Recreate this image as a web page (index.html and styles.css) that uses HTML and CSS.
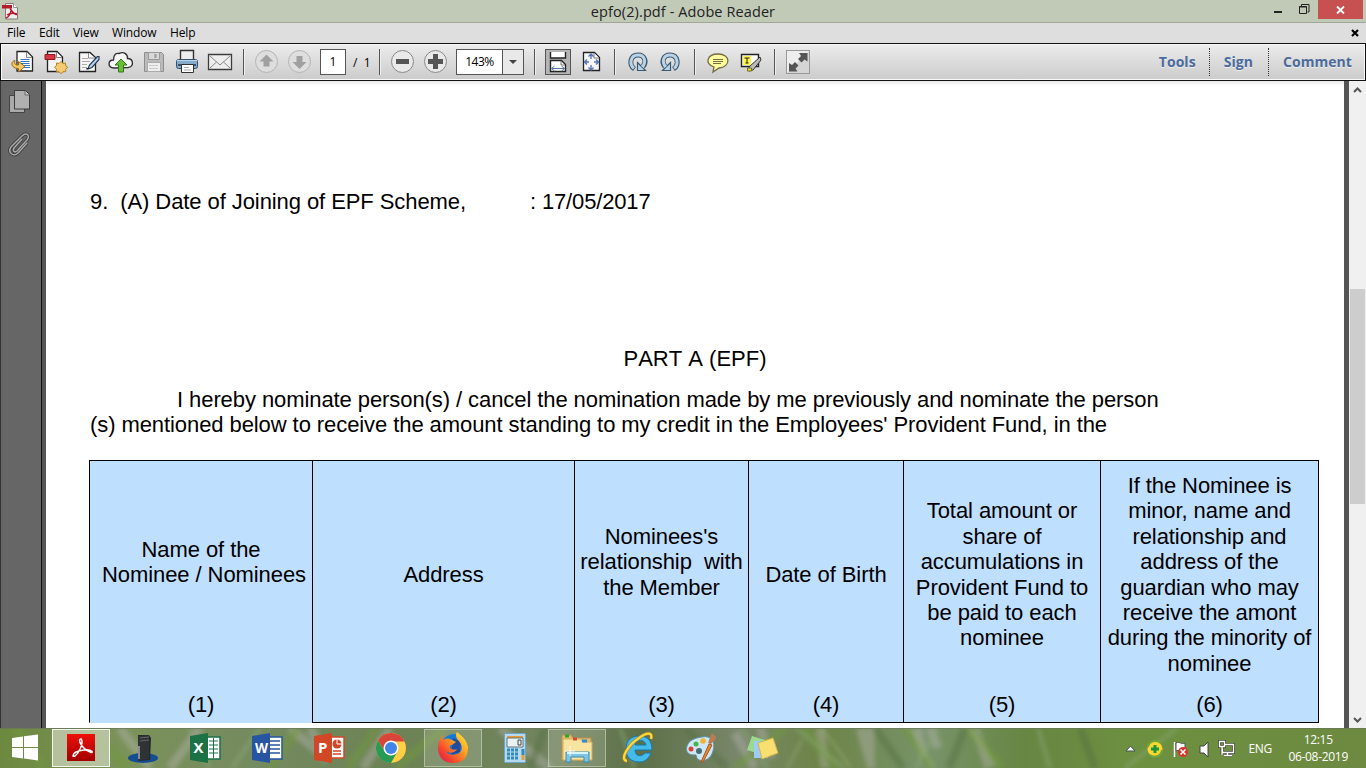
FILE: index.html
```html
<!DOCTYPE html>
<html lang="en">
<head>
<meta charset="utf-8">
<title>epfo(2).pdf - Adobe Reader</title>
<link rel="stylesheet" href="styles.css">
</head>
<body>
<div class="screen">
  <header class="titlebar">
    <svg class="app-icon" width="18" height="18" viewBox="0 0 18 18"><path d="M3.500 1.500h8l4 4v11.500h-12z" fill="#eee" stroke="#8d7777"/><path d="M11.500 1.500v4h4" fill="#fff" stroke="#999"/><path d="M0 3h10v3.500H0z" fill="#b21d2c"/><path d="M8 6.500c2.500 4 4 6 7 6M9 7c0 4-2 8-5 9M5 13c3-2 7-2 10-1" fill="none" stroke="#b6182a" stroke-width="1.500"/></svg>
    <h1 class="title">epfo(2).pdf - Adobe Reader</h1>
    <div class="window-buttons">
      <svg width="56" height="22" viewBox="0 0 56 22"><path d="M12 12h8" stroke="#222" stroke-width="2"/><path d="M39.500 6v-1.500h7.500v7.500h-1.500M37.500 6.500h7v7h-7zM37 7h8" fill="none" stroke="#222"/></svg>
      <span class="close"><svg width="9" height="8" viewBox="0 0 9 8"><path d="M1 .5l7 7M8 .5l-7 7" stroke="#fff" stroke-width="1.800"/></svg></span>
    </div>
  </header>
  <nav class="menubar">
    <span class="m-file">File</span><span class="m-edit">Edit</span><span class="m-view">View</span><span class="m-window">Window</span><span class="m-help">Help</span>
    <svg class="doc-close" width="8" height="8" viewBox="0 0 8 8"><path d="M1 1l6 6M7 1l-6 6" stroke="#000" stroke-width="2.200"/></svg>
  </nav>
  <div class="toolbar">
    <span class="tool"><svg width="28" height="28" viewBox="0 0 28 28"><path d="M9 3.500h10l5.500 5.500v14H9z" fill="#fff" stroke="#222" stroke-width="1.300"/><path d="M18.500 4v5.500h5.500" fill="#eee" stroke="#888"/><path d="M12.500 11.500h9M12.500 13.500h9M12.500 15.500h9M15 17.500h7M15 19.500h7" stroke="#3a75c4"/><path d="M7 12.500c-5 1-4 8 3.500 8v3.500l6.500-5.500-6.500-5v3.500c-3 .3-4.500-1-3.500-4.500z" fill="#f4c864" stroke="#9b6717"/></svg></span>
    <span class="tool"><svg width="28" height="28" viewBox="0 0 28 28"><path d="M6.500 3.500h9.500l5.500 5.500v14.500h-15z" fill="#f4f4f4" stroke="#222" stroke-width="1.300"/><path d="M15.500 4v5.500h5.500" fill="#fff" stroke="#888"/><path d="M4 6.500h10v5H4z" fill="#d93643" stroke="#8f1723"/><path d="M15.500 15l2.500.5 2-2 2 2 2.500-.5.2 2.700 2 1.500-2 2v2.500l-2.700 0-2 2-2-2h-2.500v-2.500l-2-2 2-1.700z" fill="#f2cb73" stroke="#b88421"/></svg></span>
    <span class="tool"><svg width="28" height="28" viewBox="0 0 28 28"><path d="M5.500 4.500h10.500l5.500 5v14h-16z" fill="#f6f6f6" stroke="#222" stroke-width="1.300"/><path d="M14.500 5v5h6.500" fill="#fff" stroke="#888"/><path d="M8 10.500h6M8 13.500h8M8 16.500h5M8 19.500h5" stroke="#aaa"/><path d="M23.500 8.500l-8 8.500-1.500 4 4-1.500 7-8v-3z" fill="#bbd4eb" stroke="#263b55" stroke-width="1.200"/><path d="M12 21l3-1" stroke="#222"/></svg></span>
    <span class="tool"><svg width="28" height="28" viewBox="0 0 28 28"><path d="M7 20c-7-.5-6-8-.5-8 0-6 3-7 5.500-6.500 5-2.500 9 1 8.500 5 6 0 7 8.500.5 9z" fill="#f7f7f7" stroke="#333" stroke-width="1.400"/><path d="M14 11l6 6h-3.500v7h-5v-7H8z" fill="#69bd39" stroke="#34791b"/></svg></span>
    <span class="tool"><svg width="28" height="28" viewBox="0 0 28 28"><path d="M4.500 4.500h17l2 2v17h-19z" fill="#bbb" stroke="#8d8d8d"/><path d="M8.500 4.500h11v7h-11z" fill="#d8d8d8" stroke="#999"/><path d="M15.500 6v4" stroke="#999" stroke-width="2"/><path d="M7.500 14.500h13v9h-13z" fill="#eee" stroke="#aaa"/><path d="M9.500 17.500h9M9.500 20.500h9" stroke="#bbb" stroke-dasharray="2 1"/></svg></span>
    <span class="tool"><svg width="28" height="28" viewBox="0 0 28 28"><path d="M7.500 2.500h13v10h-13z" fill="#eee" stroke="#333" stroke-width="1.400"/><rect x="3.500" y="11.500" width="21" height="9" rx="2" fill="#86aaca" stroke="#344d68"/><path d="M5 16h18v2H5z" fill="#365575"/><path d="M4 12.500h20" stroke="#b9d7ed"/><path d="M8.500 16.500h12v8h-12z" fill="#fff" stroke="#333"/><path d="M11 19.500h5M11 22h7" stroke="#aaa"/></svg></span>
    <span class="tool"><svg width="28" height="28" viewBox="0 0 28 28"><path d="M2.500 6.500h23v15h-23z" fill="#eee" stroke="#3c3c3c" stroke-width="1.300"/><path d="M4 8l10 9 10-9M4 20l6.500-6M24 20l-6.500-6" fill="none" stroke="#888"/></svg></span>
    <i class="separator"></i>
    <span class="tool"><svg width="28" height="28" viewBox="0 0 28 28"><circle cx="13.500" cy="13.500" r="11" fill="#dedede" stroke="#b4b4b4"/><path d="M13.500 6.500l7 7h-4v5h-6v-5h-4z" fill="#a0a0a0"/></svg></span>
    <span class="tool"><svg width="28" height="28" viewBox="0 0 28 28"><circle cx="13.500" cy="13.500" r="11" fill="#dedede" stroke="#b4b4b4"/><path d="M13.500 21l7-7h-4V8h-6v6h-4z" fill="#a0a0a0"/></svg></span>
    <span class="page-number">1</span><span class="page-total">/&nbsp; 1</span>
    <i class="separator"></i>
    <span class="tool"><svg width="28" height="28" viewBox="0 0 28 28"><circle cx="13.500" cy="13.500" r="11" fill="#e9e9e9" stroke="#888"/><path d="M7 11h13v5H7z" fill="#555"/></svg></span>
    <span class="tool"><svg width="28" height="28" viewBox="0 0 28 28"><circle cx="13.500" cy="13.500" r="11" fill="#e9e9e9" stroke="#888"/><path d="M11 6h5v5h5v5h-5v5h-5v-5H6v-5h5z" fill="#555"/></svg></span>
    <span class="zoom-box"><span class="zoom-value">143%</span><span class="zoom-arrow"></span></span>
    <i class="separator after-zoom"></i>
    <span class="tool selected"><svg width="28" height="28" viewBox="0 0 28 28"><rect x="1.500" y="1.500" width="25" height="25" fill="#b4b4b4" stroke="#555"/><path d="M6.500 4v6h15V4" fill="#fff" stroke="#222" stroke-width="1.400"/><path d="M6.500 23.500v-11h11l4 4v7z" fill="#fff" stroke="#222" stroke-width="1.400"/><path d="M17 13v4h4" fill="none" stroke="#777"/><path d="M8 20.500h12M10.500 18l-3 2.500 3 2.500M17.500 18l3 2.500-3 2.500" fill="none" stroke="#5371b0"/></svg></span>
    <span class="tool"><svg width="28" height="28" viewBox="0 0 28 28"><path d="M6.500 4.500h11l5 5v13h-16z" fill="#f7f7f7" stroke="#222" stroke-width="1.300"/><path d="M17 5v5h5" fill="#fff" stroke="#777"/><path d="M14 6v5M14 17v5M8 14h4M17 14h5M11.500 8.500L14 6l2.500 2.500M11.500 19.500L14 22l2.500-2.500M10 11.500L7.500 14l2.500 2.500M19 11.500l2.500 2.500-2.500 2.500" fill="none" stroke="#5774b4" stroke-width="1.400"/></svg></span>
    <i class="separator"></i>
    <span class="tool"><svg width="28" height="28" viewBox="0 0 28 28"><g id="rotate"><path d="M10.500 21c-6-4-4.500-14 3.500-14 7 0 9 7 5 11.500" fill="none" stroke="#3d5970" stroke-width="5"/><path d="M13.500 14.500v8h8z" fill="#b8d2e6" stroke="#3d5970" stroke-width="1.200"/><path d="M10 20.300c-5-3.700-3.800-13.300 4-13.300 7 0 8.500 7 4.300 12" fill="none" stroke="#b8d2e6" stroke-width="3"/></g></svg></span>
    <span class="tool"><svg width="28" height="28" viewBox="0 0 28 28"><use href="#rotate" transform="translate(27 0) scale(-1 1)"/></svg></span>
    <i class="separator"></i>
    <span class="tool"><svg width="28" height="28" viewBox="0 0 28 28"><path d="M14 6c13 0 13 13 1 14l-6 4 1-5C0 16 3 6 14 6z" fill="#ffff9f" stroke="#746a43" stroke-width="1.300"/><path d="M9 11.500h10M9 13.500h10M9 15.500h8" stroke="#74703f"/></svg></span>
    <span class="tool"><svg width="28" height="28" viewBox="0 0 28 28"><path d="M4.500 6.500h17v12h-17z" fill="#fff" stroke="#222" stroke-width="1.400"/><path d="M6 8h8v9H6z" fill="#fff54b"/><path d="M7.500 10h5M10 10v5M8.500 15h3" stroke="#222"/><path d="M23 9L12 19v4l4-1L24 12z" fill="#bbb" stroke="#333"/><path d="M10.500 20h4v3h-4z" fill="#eee338" stroke="#756b21"/></svg></span>
    <i class="separator"></i>
    <span class="tool"><svg width="28" height="28" viewBox="0 0 28 28"><rect x="2.500" y="2.500" width="23" height="23" fill="#d5d5d5" stroke="#999"/><path d="M3 3h22L3 25z" fill="#eee"/><path d="M15 5h8.500v8.500l-3-2-3 3-3.500-3.500 3-3zM5 15l3 2 3-3 3.500 3.500-3 3 2 3H5z" fill="#555"/></svg></span>
    <div class="panes"><b>Tools</b><b>Sign</b><b>Comment</b></div>
  </div>
  <main class="viewer">
    <aside class="rail">
      <svg width="24" height="26" viewBox="0 0 24 26"><path d="M2.500 7.500h15v17h-15z" fill="#aaa" stroke="#444"/><path d="M7.500 2.500h11l4 4v14.500h-15z" fill="#b0b0b0" stroke="#3c3c3c"/><path d="M18 3v4h4" fill="#ccc" stroke="#666"/></svg>
      <svg width="24" height="26" viewBox="0 0 24 26"><path d="M15 8L7 17c-2 3 1 5 3 3l10-11c4-5-1-8-5-4L4 16c-4 6 3 10 7 6l9-10" fill="none" stroke="#3c3c3c" stroke-width="3.200"/><path d="M15 8L7 17c-2 3 1 5 3 3l10-11c4-5-1-8-5-4L4 16c-4 6 3 10 7 6l9-10" fill="none" stroke="#aaa" stroke-width="1.500"/></svg>
    </aside>
    <article class="page">
      <p class="joining"><span class="joining-label">9.&nbsp; (A) Date of Joining of EPF Scheme,</span><span class="joining-date">: 17/05/2017</span></p>
      <h2 class="part">PART A (EPF)</h2>
      <p class="declaration"><span class="line-one">I hereby nominate person(s) / cancel the nomination made by me previously and nominate the person</span><span class="line-two">(s) mentioned below to receive the amount standing to my credit in the Employees' Provident Fund, in the</span></p>
      <div class="nominees">
        <section class="raised name"><p><span class="first-line">Name of the</span><br>Nominee / Nominees</p><span>(1)</span></section>
        <section><p>Address</p><span>(2)</span></section>
        <section class="raised"><p>Nominees's<br>relationship&nbsp; with<br>the Member</p><span>(3)</span></section>
        <section><p>Date of Birth</p><span>(4)</span></section>
        <section><p>Total amount or<br>share of<br>accumulations in<br>Provident Fund to<br>be paid to each<br>nominee</p><span>(5)</span></section>
        <section><p>If the Nominee is<br>minor, name and<br>relationship and<br>address of the<br>guardian who may<br>receive the amont<br>during the minority of<br>nominee</p><span>(6)</span></section>
      </div>
    </article>
    <div class="scrollbar">
      <svg width="9" height="6" viewBox="0 0 9 6"><path d="M1 5l3.500-3.500L8 5" fill="none" stroke="#555" stroke-width="2"/></svg>
      <div class="thumb"></div>
      <svg width="9" height="6" viewBox="0 0 9 6"><path d="M1 1l3.500 3.500L8 1" fill="none" stroke="#555" stroke-width="2"/></svg>
    </div>
  </main>
  <footer class="taskbar">
    <svg class="grass" viewBox="0 0 1366 40" preserveAspectRatio="none">
      <defs><filter id="soft" x="-5%" y="-30%" width="110%" height="160%"><feGaussianBlur stdDeviation="2"/></filter></defs>
      <g filter="url(#soft)" fill="none">
        <path d="M120 0l30 40M170 40L200 0M290 0l38 32M310 0l15 25M363 40L390 0M500 0l50 40M820 0l5 40M860 0l12 40M870 0v30M918 0l5 28M930 0l8 20M975 0l14 40M735 5l20 35M760 0l12 30" stroke="#b8b4b4" stroke-width="9" opacity=".4"/>
        <path d="M15 0l30 40M88 0l40 40M270 40L298 0M348 40L377 0M396 40L445 0M735 40L785 0M804 0l32 40M905 0l27 40M969 0l33 40" stroke="#6f983c" stroke-width="9" opacity=".5"/>
        <path d="M188 0l22 40M232 40L260 0M620 0l15 40M742 0l25 40M796 0l48 40M938 0l-22 40M1038 0l12 40M1177 0l-52 40" stroke="#8aa878" stroke-width="4" opacity=".5"/>
        <path d="M545 0l-15 40M685 0l42 40M875 0l28 40M949 40L965 0M1080 0l15 40" stroke="#526f40" stroke-width="8" opacity=".45"/>
        <path d="M822 0l29 40M910 0l24 40M969 0l27 38M787 40l15-28" stroke="#a4b57f" stroke-width="1.500" opacity=".7"/>
      </g>
      <path d="M0 .5h1366" stroke="#69755b" opacity=".7"/>
    </svg>
    <div class="apps">
      <span class="start"><svg width="28" height="28" viewBox="0 0 28 28"><path d="M1 4l11-1.500V13H1zM13 2.300L27 .5V13H13zM1 14h11v10.500L1 23zM13 14h14v12.500l-14-2z" fill="#fff"/></svg></span>
      <span class="app current"><svg width="30" height="30" viewBox="0 0 30 30"><defs><linearGradient id="red" x2="0" y2="1"><stop stop-color="#ed1109"/><stop offset="1" stop-color="#a30000"/></linearGradient></defs><path d="M1 1h28v27H1z" fill="url(#red)"/><path d="M15 6c-4 0 1 10 9 13 4 2 3-3-6-2S7 20 7 23c2 2 8-6 9-13 0-3 0-4-1-4z" fill="none" stroke="#fff" stroke-width="1.500"/></svg></span>
      <span class="app"><svg width="32" height="32" viewBox="0 0 32 32"><ellipse cx="16" cy="26" rx="15" ry="5" fill="#144d91"/><path d="M11 3l11 0 2 3-1 22-12 1z" fill="#25282b"/><path d="M11 4l11-1v24l-11 2z" fill="#303336"/><path d="M13 6l9-1M13 9l9-1" stroke="#666"/><path d="M12 14v13" stroke="#aaa" stroke-width="1.500"/></svg></span>
      <span class="app"><svg width="32" height="32" viewBox="0 0 32 32"><path d="M16 5h15v22H16z" fill="#fff" stroke="#1c7245" stroke-width="1.500"/><path d="M20 9h9M20 13h9M20 17h9M20 21h9M24.500 6v20" stroke="#1c7245"/><path d="M1 4l18-3v30L1 28z" fill="#1c7245"/><text x="4.500" y="21" class="letter">X</text></svg></span>
      <span class="app"><svg width="32" height="32" viewBox="0 0 32 32"><path d="M16 5h15v22H16z" fill="#fff" stroke="#2855a1" stroke-width="1.500"/><path d="M19 9h10M19 13h10M19 17h10M19 21h10" stroke="#2855a1" stroke-width="1.500"/><path d="M1 4l18-3v30L1 28z" fill="#2855a1"/><text x="4" y="21" class="letter" textLength="13" lengthAdjust="spacingAndGlyphs">W</text></svg></span>
      <span class="app"><svg width="32" height="32" viewBox="0 0 32 32"><path d="M16 5h15v21H16z" fill="#fff" stroke="#d24726" stroke-width="1.500"/><path d="M20 19h8M20 22h8" stroke="#d24726" stroke-width="1.500"/><circle cx="24" cy="12" r="4.500" fill="#d24726"/><path d="M24 7v5h5" stroke="#fff" fill="none"/><path d="M1 4l18-3v30L1 28z" fill="#d24726"/><text x="5" y="21" class="letter">P</text></svg></span>
      <span class="app"><svg width="32" height="32" viewBox="0 0 32 32"><circle cx="16" cy="16" r="15" fill="#ffce44"/><path d="M3 8.500A15 15 0 0 1 29.500 9.500H16L10 20z" fill="#d94538"/><path d="M3 8.500A15 15 0 0 0 16 31l6.500-11.500L10 20z" fill="#279b54"/><circle cx="16" cy="16" r="7.500" fill="#fff"/><circle cx="16" cy="16" r="6" fill="#4285e8"/></svg></span>
      <span class="app running"><svg width="32" height="32" viewBox="0 0 32 32"><defs><linearGradient id="fox" x1="1" x2="0" y2="1"><stop stop-color="#fff33d"/><stop offset=".4" stop-color="#ff9c20"/><stop offset=".75" stop-color="#f33c33"/><stop offset="1" stop-color="#cc195d"/></linearGradient></defs><circle cx="17" cy="14" r="12" fill="#1679d6"/><path d="M16 6l8 4-1 10-9 3z" fill="#234b9b"/><path d="M6 2C5 5 5 7 6 8c3-2 6-2 9 0l4 2-4 3c-2 0-3 2-1 4 2 1 4 1 6 0-2 4-7 5-11 2 2 5 12 5 15 0 2-4 0-7-2-10-3-3-4-6-2-9 5 4 9 7 11 15 0 12-6 16-15 16S1 25 1 16c0-6 2-10 5-14z" fill="url(#fox)"/></svg></span>
      <span class="app"><svg width="32" height="32" viewBox="0 0 32 32"><rect x="5.500" y="1.500" width="21" height="29" rx="1" fill="#b6d9ed" stroke="#69a6c8"/><path d="M8 4h16v2H8z" fill="#e69b37"/><path d="M8 6h16v9H8z" fill="#e9f1f1" stroke="#5f7780"/><path d="M19 8h3v5h-3z" fill="none" stroke="#444"/><path d="M8 18h12M8 22h12M8 26h12" stroke="#348ab7" stroke-width="3" stroke-dasharray="3 1"/><path d="M24 17v6" stroke="#348ab7" stroke-width="3"/><path d="M24 23v5" stroke="#ec9f29" stroke-width="3"/></svg></span>
      <span class="app running"><svg width="34" height="32" viewBox="0 0 34 32"><path d="M2 3h9l2 3h18v22H2z" fill="#e3bd68" stroke="#bc914c"/><path d="M3 7h18l2 3h9v18H3z" fill="#f9e3a1" stroke="#d3ac5c"/><path d="M5 4h4" stroke="#27a53d" stroke-width="3"/><path d="M13 7h4" stroke="#d64835" stroke-width="3"/><path d="M22 9h5" stroke="#328ad7" stroke-width="3"/><path d="M6 30V20h23v10h-5v-5H11v5z" fill="#7ec5e4" stroke="#398cb0"/><path d="M7 21h21" stroke="#d7f3fb" stroke-width="2"/><path d="M10 14v10M5 19h10" stroke="#fff" opacity=".8"/></svg></span>
      <span class="app"><svg width="34" height="34" viewBox="0 0 34 34"><path d="M17 5c9 0 13 5 13 14H13c0 7 7 7 10 3h6c-3 7-7 9-12 9-8 0-13-5-13-13S9 5 17 5zm-4 9h11c-1-6-10-6-11 0z" fill="#43bce9" stroke="#1977b4"/><path d="M5 30c-8-1 1-16 12-23C25 1 31 1 29 8" fill="none" stroke="#a88222" stroke-width="3.500"/><path d="M5 30c-8-1 1-16 12-23C25 1 31 1 29 8" fill="none" stroke="#fed83e" stroke-width="2.300"/></svg></span>
      <span class="app"><svg width="34" height="34" viewBox="0 0 34 34"><path d="M18 6c9-2 14 5 11 14-2 8-9 11-14 9-4-2-1-6-5-5-5 0-9-3-7-9C5 9 11 7 18 6z" fill="#cde8f4" stroke="#5d91b0"/><circle cx="7" cy="18" r="2.500" fill="#df3f3b"/><circle cx="12" cy="13" r="2.500" fill="#44b450"/><circle cx="19" cy="10" r="2.800" fill="#f1b334"/><circle cx="15" cy="20" r="3" fill="#456e72"/><path d="M17 31l8-18 3 1-9 17z" fill="#ed8a2f" stroke="#a65522"/><path d="M24 12c2-5 3-9 4-10 3 3 5 3 4 6-1 2-4 3-5 5z" fill="#b87b52"/></svg></span>
      <span class="app"><svg width="34" height="32" viewBox="0 0 34 32"><path d="M6 4l13 4-5 14-13-4z" fill="#9bd98f"/><path d="M8 9h14v17H8z" fill="#9dcdf6"/><path d="M12 11l15-5 5 15-16 6z" fill="#f7df70" stroke="#d1b64d"/></svg></span>
    </div>
    <div class="tray">
      <svg width="112" height="22" viewBox="0 0 112 22"><path d="M3 14l4.500-5 4.500 5z" fill="#fff" stroke="#455"/><circle cx="32" cy="12" r="7.500" fill="#ffd62b"/><path d="M25 10c1-6 8-8 13-4M39 13c-1 7-8 8-12 5" fill="none" stroke="#6fa63a" stroke-width="2"/><path d="M32 8v8M28 12h8" stroke="#169642" stroke-width="3"/><path d="M51.500 5v15" stroke="#fff" stroke-width="1.500"/><path d="M53 6c4-2 5 2 9 0v8c-4 2-6-2-9 0z" fill="#fff" stroke="#555"/><circle cx="60" cy="15" r="5" fill="#d7352c"/><path d="M57.500 12.500l5 5M62.500 12.500l-5 5" stroke="#fff" stroke-width="1.500"/><path d="M77 9h4l4-4v15l-4-4h-4z" fill="#fff" stroke="#444"/><path d="M101.500 7.500h9v8h-11v-4M104.500 16v3M101 18.500h8M96.500 4.500h5v5h-5zM99 10v8" fill="none" stroke="#454a3c" stroke-width="3"/><path d="M101.500 7.500h9v8h-11v-4M104.500 16v3M101 18.500h8M96.500 4.500h5v5h-5zM99 10v8" fill="none" stroke="#fff" stroke-width="1.300"/></svg>
      <span class="language">ENG</span>
      <span class="clock"><span>12:15</span><span>06-08-2019</span></span>
    </div>
  </footer>
</div>
</body>
</html>
```
FILE: styles.css
```css
* { box-sizing: border-box; }
body { margin: 0; font-family: "Open Sans", "Noto Sans", sans-serif; color: #000; }
svg { display: block; overflow: visible; }
.screen { width: 1366px; height: 768px; display: grid; grid-template-rows: 23px 20px 38px 647px 40px; overflow: hidden; }

.titlebar { background: #c1cab7; border-bottom: 1px solid #a0a895; display: grid; grid-template-columns: 230px 1fr 230px; }
.app-icon { margin: 2px 0 0 2px; }
.title { margin: 0; font-size: 14.500px; font-weight: 400; line-height: 23px; text-align: center; color: #222; letter-spacing: .1px; }
.window-buttons { display: flex; justify-content: flex-end; padding-right: 3px; }
.close { width: 45px; height: 19px; background: #c75050; display: grid; place-items: center; }
.menubar { background: #dedede; display: flex; font-size: 12px; line-height: 20px; padding-left: 7px; letter-spacing: -.15px; }
.m-file { width: 32px; } .m-edit { width: 34px; } .m-view { width: 39px; } .m-window { width: 58px; }
.doc-close { margin: 6px 7px 0 auto; }

.toolbar { border: 1px solid #111; box-shadow: inset 0 0 0 1px #f8f8f8; background: linear-gradient(#ececec, #cbcbcb); display: flex; align-items: center; padding-left: 4px; font-size: 12px; }
.tool { width: 33px; flex: none; display: flex; justify-content: center; }
.separator { width: 2px; height: 26px; flex: none; margin: 0 5px 0 7px; background: linear-gradient(90deg, #555 50%, #eee 50%); }
.page-number { width: 26px; height: 26px; flex: none; margin-left: 4px; border: 1px solid #555; background: #fff; text-align: center; line-height: 24px; }
.page-total { width: 26px; flex: none; padding-left: 7px; white-space: nowrap; }
.zoom-box { width: 68px; height: 26px; flex: none; display: flex; margin-left: 4px; border: 1px solid #555; background: #fff; }
.zoom-value { width: 45px; text-align: center; line-height: 24px; letter-spacing: -.5px; }
.zoom-arrow { flex: 1; border-left: 1px solid #555; background: #e9e9e9; display: grid; place-items: center; }
.zoom-arrow::after { content: ""; border: 4px solid transparent; border-top-color: #444; border-bottom: 0; }
.after-zoom { margin-left: 10px; }
.panes { margin-left: auto; height: 28px; display: flex; font-size: 14px; line-height: 27px; color: #4b6b9c; text-shadow: 0 1px #eee; letter-spacing: .05px; }
.panes b { padding: 0 13px 0 14px; }
.panes b:nth-child(2) { padding-right: 15px; }
.panes b + b { border-left: 1px dotted #333; }

.viewer { display: grid; grid-template-columns: 41px 1308px 17px; }
.rail { background: #666; border-left: 1px solid #333; padding: 7px 0 0 6px; display: flex; flex-direction: column; gap: 17px; }
.page { border-left: 1px solid #111; box-shadow: inset 4px 0 #555, inset -5px 0 #555; padding: 0 0 0 48px; font-family: "Liberation Sans", Arial, sans-serif; font-size: 22px; line-height: 25.400px; letter-spacing: -.08px; background: linear-gradient(#e8e8e8, #fff 5px); overflow: hidden; white-space: nowrap; }
.joining { margin: 108px 0 0; display: flex; height: 26px; }
.joining-label { width: 440px; }
.joining-date { letter-spacing: -.15px; }
.part { font-size: 22px; font-weight: 400; margin: 131px 0 0; width: 1210px; text-align: center; height: 26px; font-kerning: none; letter-spacing: 0; }
.declaration { margin: 15px 0 0; height: 51px; }
.declaration span { display: block; width: max-content; }
.line-one { margin-left: 87px; }
.nominees { margin: 22px 0 0 -1px; width: 1230px; height: 263px; display: grid; grid-template-columns: 223px 262px 174px 155px 197px 219px; border-top: 1px solid #000; }
.nominees section { background: #bfdfff; border-left: 1px solid #000; border-bottom: 1px solid #000; display: grid; grid-template-rows: 226px 1fr; text-align: center; }
.nominees section:first-child { border-bottom-color: #bfdfff; }
.nominees section:last-child { border-right: 1px solid #000; }
.nominees p { margin: auto 0; padding-top: 1px; }
.nominees .raised p { padding: 0 0 24px; }
.nominees .name p { padding-left: 6px; }
.first-line { padding-right: 6px; }
.nominees section > span { padding-top: 5px; }
.scrollbar { background: #f0f0f0; display: grid; grid-template-rows: 208px 215px 1fr; justify-items: center; }
.scrollbar > svg:first-child { margin-top: 6px; }
.scrollbar > svg:last-child { align-self: end; margin-bottom: 5px; }
.thumb { width: 15px; background: #cdcdcd; }

.taskbar { display: grid; background: linear-gradient(90deg, #6d893f 0, #7b9259 9%, #748a60 19%, #6d8254 29%, #71845f 41%, #5d7048 47%, #78876a 54%, #6d8447 60%, #78936a 68%, #678643 75%, #6d9040 83%, #6d8a40 100%); overflow: hidden; }
.taskbar > * { grid-area: 1 / 1; }
.grass { width: 1366px; height: 40px; }
.apps { display: flex; height: 40px; z-index: 1; }
.start { width: 50px; padding: 6px 0 0 11px; }
.app { width: 58px; height: 38px; margin: 1px 2px; display: grid; place-items: center; border: 1px solid transparent; }
.current { border-color: #f4f6ee; background: #d5dbc5aa; }
.running { border-color: #d9dfcb88; background: #ffffff26; }
.letter { font: bold 15px "Open Sans", sans-serif; fill: #fff; }
.tray { justify-self: end; display: flex; color: #fff; font-size: 12px; z-index: 1; padding: 0 18px 0 0; align-items: center; }
.language { width: 40px; margin-left: 13px; font-size: 12px; letter-spacing: -.3px; }
.clock { text-align: center; line-height: 17px; letter-spacing: -.3px; }
.clock span { display: block; }
```
